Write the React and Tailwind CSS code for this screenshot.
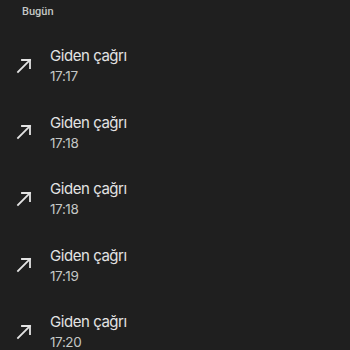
import React from 'react'

const calls = ['17:17', '17:18', '17:18', '17:19', '17:20']

function ArrowOut() {
  return (
    <svg width="18" height="18" viewBox="0 0 18 18" fill="none" stroke="#e3e3e3" strokeWidth="1.8" strokeLinecap="square">
      <path d="M3 15L15 3" />
      <path d="M7 3H15V11" />
    </svg>
  )
}

function CallRow({ time }) {
  return (
    <div className="flex h-[66.5px] items-center">
      <div className="flex w-[48px] justify-center pt-[1px]">
        <ArrowOut />
      </div>
      <div className="flex flex-col pl-[2px]">
        <span className="font-['Inter',sans-serif] text-[15px] leading-[20px] tracking-[-0.45px] text-[#e3e3e3]">Giden çağrı</span>
        <span className="mt-[2px] font-['Inter',sans-serif] text-[13.5px] leading-[16px] tracking-[-0.4px] text-[#c4c7c5]">{time}</span>
      </div>
    </div>
  )
}

export default function App() {
  return (
    <div className="h-[350px] w-[350px] overflow-hidden bg-[#1f1f1f] font-['Roboto',sans-serif]">
      <div className="px-[22px] pt-[4px] text-[11px] font-medium leading-[16px] text-[#c4c7c5]">Bugün</div>
      <div className="pt-[12px]">
        {calls.map((t, i) => (
          <CallRow key={i} time={t} />
        ))}
      </div>
    </div>
  )
}
